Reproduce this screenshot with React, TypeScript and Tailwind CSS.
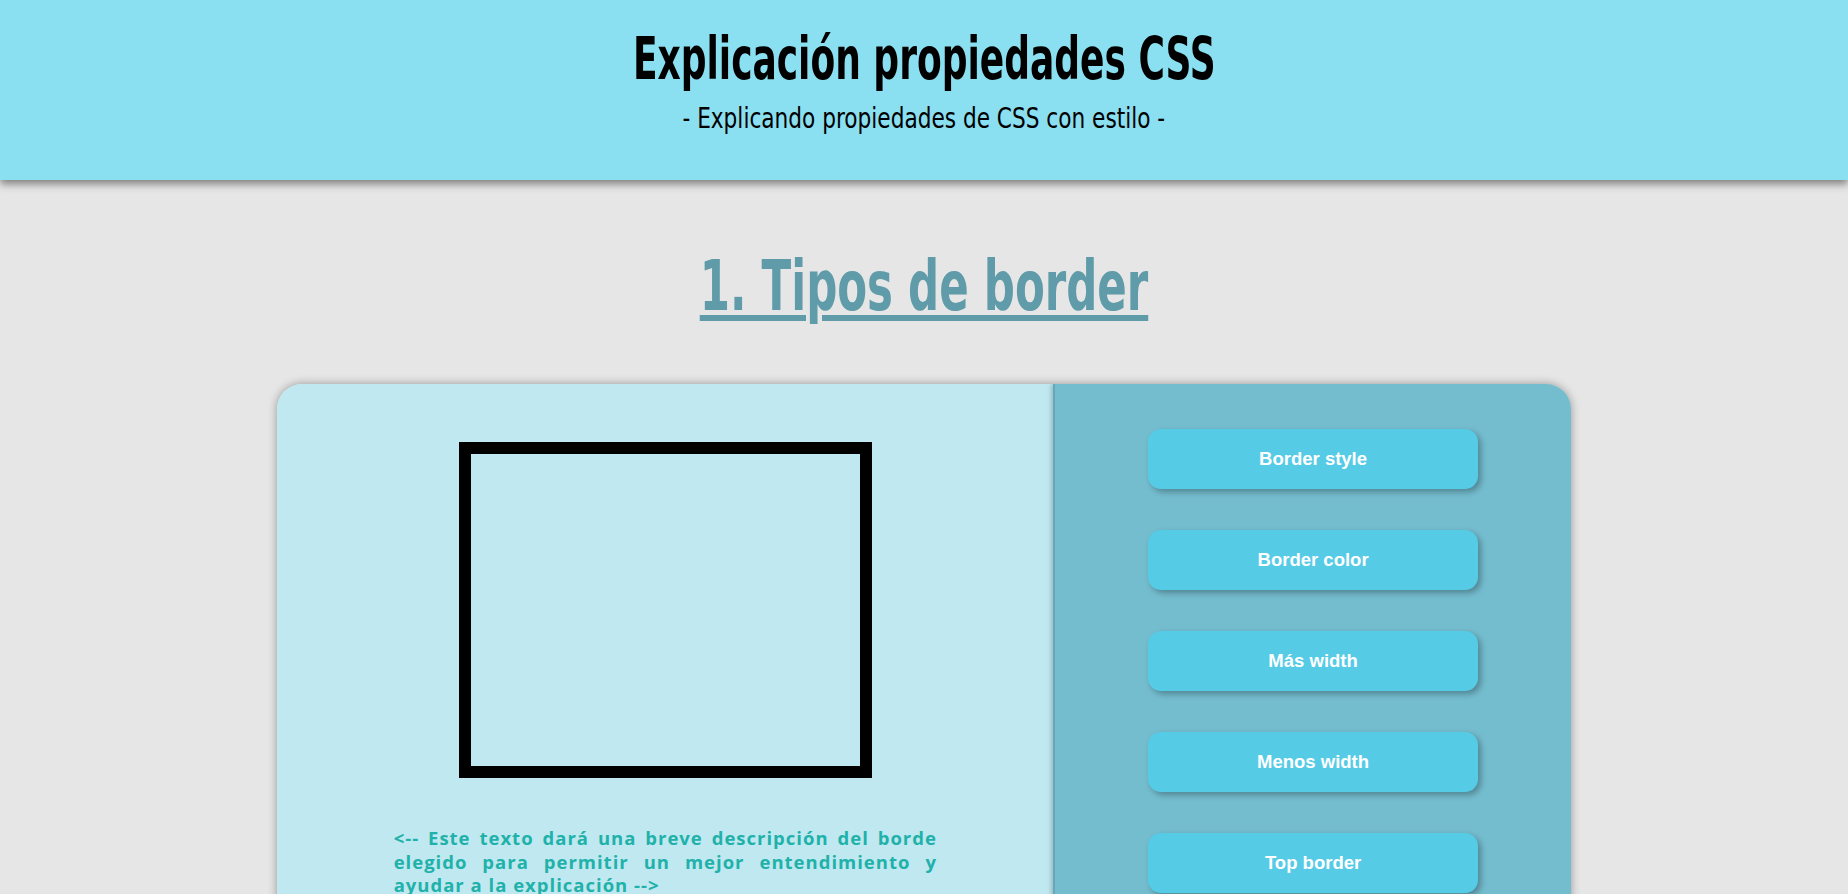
import React from 'react';

const botones = ['Border style', 'Border color', 'Más width', 'Menos width', 'Top border'];

export default function App() {
  return (
    <div className="min-h-screen bg-[#E6E6E6] overflow-hidden">
      {/* Cabecera */}
      <header className="h-[180px] bg-[#8ADFF1] shadow-[0_4px_8px_rgba(0,0,0,0.45)] flex flex-col items-center pt-[30px] font-['DejaVu_Sans_Condensed','DejaVu_Sans',sans-serif] text-black">
        <h1 className="text-[58px] leading-[58px] font-bold whitespace-nowrap">
          <span className="inline-block scale-x-[0.69]">Explicación propiedades CSS</span>
        </h1>
        <p className="mt-[16px] text-[29px] leading-[29px] whitespace-nowrap">
          <span className="inline-block scale-x-[0.83]">- Explicando propiedades de CSS con estilo -</span>
        </p>
      </header>

      <main>
        <h2 className="mt-[71px] text-center text-[70px] leading-[70px] font-bold text-[#5F9BA8] whitespace-nowrap font-['DejaVu_Sans_Condensed','DejaVu_Sans',sans-serif]">
          <span className="inline-block scale-x-[0.69] underline decoration-[6px] underline-offset-[5px]">1. Tipos de border</span>
        </h2>

        <section className="mt-[63px] mx-auto w-[70%] flex rounded-[25px] overflow-hidden shadow-[0_0_10px_rgba(0,0,0,0.35)]">
          {/* Zona de ejemplo */}
          <div className="w-[60%] bg-[#C0E8F0] pt-[58px] pb-[40px]">
            <div className="mx-auto w-[413px] h-[336px] border-[12px] border-black" />
            <p className="mt-[48px] mx-auto w-[70%] text-justify text-[18.5px] leading-[23.5px] font-bold tracking-[1px] text-[#20B2AA] font-['Open_Sans',sans-serif]">
              &lt;-- Este texto dará una breve descripción del borde elegido para permitir un mejor entendimiento y ayudar a la explicación --&gt;
            </p>
          </div>

          {/* Botones */}
          <div className="w-[40%] bg-[#74BDCF] border-l-2 border-[#64A9BA] shadow-[-2px_0_4px_rgba(0,0,0,0.2)] flex flex-col items-center gap-[41px] pt-[45px] pb-[45px]">
            {botones.map((b) => (
              <button
                key={b}
                className="w-[330px] h-[60px] rounded-[13px] bg-[#56CBE6] text-white text-[18.5px] font-bold font-['Liberation_Sans',Arial,sans-serif] shadow-[3px_3px_6px_rgba(0,0,0,0.3)]"
              >
                {b}
              </button>
            ))}
          </div>
        </section>
      </main>
    </div>
  );
}
